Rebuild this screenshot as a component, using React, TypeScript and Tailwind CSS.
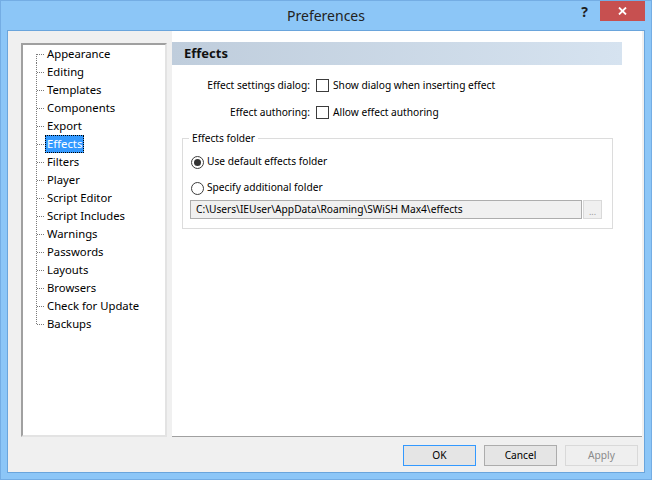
import React from "react";

const treeItems = [
  "Appearance",
  "Editing",
  "Templates",
  "Components",
  "Export",
  "Effects",
  "Filters",
  "Player",
  "Script Editor",
  "Script Includes",
  "Warnings",
  "Passwords",
  "Layouts",
  "Browsers",
  "Check for Update",
  "Backups",
];

function Connector({ first, last }: { first: boolean; last: boolean }) {
  return (
    <svg width="22" height="18" className="shrink-0" shapeRendering="crispEdges">
      <line
        x1="13.5"
        y1={first ? 9 : 0}
        x2="13.5"
        y2={last ? 10 : 18}
        stroke="#7a7a7a"
        strokeWidth="1"
        strokeDasharray="1 1"
      />
      <line x1="14" y1="9.5" x2="22" y2="9.5" stroke="#7a7a7a" strokeWidth="1" strokeDasharray="1 1" />
    </svg>
  );
}

function Checkbox() {
  return <span className="block w-[13px] h-[13px] border border-[#3c3c3c] bg-white shrink-0" />;
}

function Radio({ checked }: { checked?: boolean }) {
  return (
    <span className="flex items-center justify-center w-[13px] h-[13px] rounded-full border border-[#3c3c3c] bg-white shrink-0">
      {checked && <span className="block w-[7px] h-[7px] rounded-full bg-[#333333]" />}
    </span>
  );
}

export default function App() {
  return (
    <div className="w-[652px] h-[480px] bg-[#8cc6f7] border border-[#74ade4] flex flex-col px-[6px] pb-[6px] font-['Noto_Sans',sans-serif] text-[11.3px] text-black select-none">
      {/* Title bar */}
      <div className="h-[29px] grid grid-cols-[1fr_auto_1fr]">
        <div />
        <div className="flex items-center text-[14px] text-[#222222]">Preferences</div>
        <div className="flex items-start justify-end">
          <span className="h-[20px] flex items-center mr-[12px] text-[14px] font-bold text-[#1e1e1e]">?</span>
          <button className="w-[45px] h-[20px] bg-[#c75050] flex items-center justify-center">
            <svg width="9" height="8" viewBox="0 0 9 8">
              <path d="M1 0.5 L8 7.5 M8 0.5 L1 7.5" stroke="white" strokeWidth="1.8" />
            </svg>
          </button>
        </div>
      </div>

      {/* Client area */}
      <div className="flex-1 flex flex-col bg-[#f0f0f0] border border-[#6aa5dc]">
        <div className="h-[406px] flex">
          {/* Tree column */}
          <div className="w-[164px] pt-[12px] pl-[13px] pr-[5px]">
            <div className="h-[394px] bg-white border-2 border-t-[#a0a0a0] border-l-[#a0a0a0] border-b-[#e3e3e3] border-r-[#e3e3e3]">
              <ul className="flex flex-col">
                {treeItems.map((item, i) => {
                  const selected = item === "Effects";
                  return (
                    <li key={item} className="h-[18px] flex items-center">
                      <Connector first={i === 0} last={i === treeItems.length - 1} />
                      <span
                        className={
                          selected
                            ? "h-[18px] flex items-center px-[1px] border border-dotted border-black bg-[#3399ff] text-white"
                            : "h-[18px] flex items-center px-[1px] border border-transparent"
                        }
                      >
                        {item}
                      </span>
                    </li>
                  );
                })}
              </ul>
            </div>
          </div>

          {/* Page */}
          <div className="w-[470px] bg-white border-b border-[#a0a0a0] flex flex-col text-[10.2px]">
            <div className="mt-[11px] w-[450px] h-[23px] flex items-center pl-[12px] bg-gradient-to-r from-[#bfcddc] to-[#d6e3f0] text-[13px] font-bold text-[#111111]">
              Effects
            </div>

            <div className="mt-[12px] grid grid-cols-[138px_auto] gap-y-[9px] items-center">
              <div className="h-[18px] flex items-center justify-end">Effect settings dialog:</div>
              <div className="flex items-center gap-[4px] pl-[6px]">
                <Checkbox />
                <span>Show dialog when inserting effect</span>
              </div>
              <div className="h-[18px] flex items-center justify-end">Effect authoring:</div>
              <div className="flex items-center gap-[4px] pl-[6px]">
                <Checkbox />
                <span>Allow effect authoring</span>
              </div>
            </div>

            <fieldset className="mt-[8px] ml-[10px] w-[431px] border border-[#dcdcdc] pb-[9px]">
              <legend className="ml-[6px] px-[3px] leading-[16px]">Effects folder</legend>
              <div className="pl-[7px]">
                <div className="mt-[7px] h-[18px] flex items-center gap-[3px] pl-[1px]">
                  <Radio checked />
                  <span>Use default effects folder</span>
                </div>
                <div className="mt-[8px] h-[18px] flex items-center gap-[3px] pl-[1px]">
                  <Radio />
                  <span>Specify additional folder</span>
                </div>
                <div className="mt-[3px] flex gap-[1px]">
                  <div className="w-[392px] h-[19px] bg-[#f0f0f0] border border-[#adadad] flex items-center pl-[5px]">
                    C:\Users\IEUser\AppData\Roaming\SWiSH Max4\effects
                  </div>
                  <div className="w-[19px] h-[19px] bg-[#f0f0f0] border border-[#d9d9d9] flex items-end justify-center text-[9px] leading-[12px] text-[#9a9a9a]">
                    ...
                  </div>
                </div>
              </div>
            </fieldset>
          </div>
        </div>

        {/* Buttons */}
        <div className="flex justify-end gap-[8px] pt-[8px] pr-[6px] text-[10.2px]">
          <button className="w-[73px] h-[21px] border border-[#3399ff] bg-[#e5e5e5] flex items-center justify-center">
            OK
          </button>
          <button className="w-[73px] h-[21px] border border-[#acacac] bg-[#e5e5e5] flex items-center justify-center">
            Cancel
          </button>
          <button className="w-[73px] h-[21px] border border-[#d9d9d9] bg-[#efefef] text-[#8a8a8a] flex items-center justify-center">
            Apply
          </button>
        </div>
      </div>
    </div>
  );
}
